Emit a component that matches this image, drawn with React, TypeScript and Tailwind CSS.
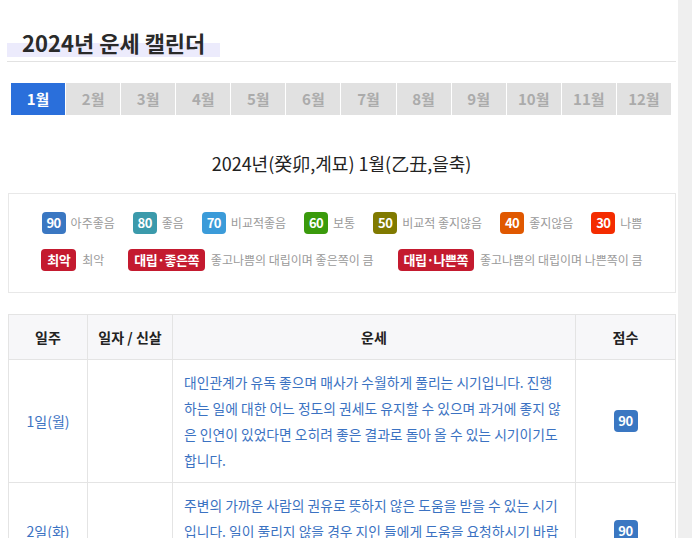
const months = ["1월", "2월", "3월", "4월", "5월", "6월", "7월", "8월", "9월", "10월", "11월", "12월"];

const scores = [
  { n: 90, label: "아주좋음", bg: "bg-[#3a77c2]" },
  { n: 80, label: "좋음", bg: "bg-[#3b9aab]" },
  { n: 70, label: "비교적좋음", bg: "bg-[#3b9bd9]" },
  { n: 60, label: "보통", bg: "bg-[#3a9a0c]" },
  { n: 50, label: "비교적 좋지않음", bg: "bg-[#807a00]" },
  { n: 40, label: "좋지않음", bg: "bg-[#e05800]" },
  { n: 30, label: "나쁨", bg: "bg-[#f42c00]" },
];

const specials = [
  { tag: "최악", label: "최악" },
  { tag: "대립·좋은쪽", label: "좋고나쁨의 대립이며 좋은쪽이 큼" },
  { tag: "대립·나쁜쪽", label: "좋고나쁨의 대립이며 나쁜쪽이 큼" },
];

const days = [
  {
    date: "1일(월)",
    score: 90,
    lines: [
      "대인관계가 유독 좋으며 매사가 수월하게 풀리는 시기입니다. 진행",
      "하는 일에 대한 어느 정도의 권세도 유지할 수 있으며 과거에 좋지 않",
      "은 인연이 있었다면 오히려 좋은 결과로 돌아 올 수 있는 시기이기도",
      "합니다.",
    ],
  },
  {
    date: "2일(화)",
    score: 90,
    lines: [
      "주변의 가까운 사람의 권유로 뜻하지 않은 도움을 받을 수 있는 시기",
      "입니다. 일이 풀리지 않을 경우 지인 들에게 도움을 요청하시기 바랍",
      "니다. 작은 부탁이 큰 결과로 돌아올 수 있습니다.",
    ],
  },
];

export default function App() {
  return (
    <div className="flex h-screen overflow-hidden bg-white font-['Noto_Sans_CJK_KR','Noto_Sans',sans-serif] text-[#222]">
      <main className="flex-1 pl-[7px] pr-[2px]">
        {/* Heading */}
        <div className="border-b border-[#e2e2e2] pt-[27px] pb-[4px]">
          <h1 className="inline-block h-[30px] bg-[linear-gradient(transparent_16px,#ecebfc_16px)] px-[15px] text-[22px] leading-[30px] font-bold text-[#2a2a2a]">
            2024년 운세 캘린더
          </h1>
        </div>

        {/* Month tabs */}
        <div className="mt-[21px] ml-[4px] mr-[5px] flex gap-px">
          {months.map((m, i) => (
            <div
              key={m}
              className={
                i === 0
                  ? "flex h-[32px] flex-1 items-center justify-center bg-[#2a6fdb] text-[15px] font-bold text-white"
                  : "flex h-[32px] flex-1 items-center justify-center bg-[#e1e1e1] text-[15px] font-semibold text-[#ababab]"
              }
            >
              {m}
            </div>
          ))}
        </div>

        <p className="mt-[36px] text-center text-[18px] leading-[24px] text-[#222]">
          2024년(癸卯,계묘) 1월(乙丑,을축)
        </p>

        {/* Legend */}
        <div className="mt-[18px] ml-px border border-[#e8e8e8] pt-[18px] pb-[21px]">
          <div className="flex justify-center gap-[18px]">
            {scores.map((s) => (
              <div key={s.n} className="flex items-center gap-[5px]">
                <span
                  className={`flex h-[22px] w-[24px] items-center justify-center rounded-[4px] text-[13px] font-bold tracking-[-0.5px] text-white ${s.bg}`}
                >
                  {s.n}
                </span>
                <span className="text-[12px] text-[#9a9a9a]">{s.label}</span>
              </div>
            ))}
          </div>
          <div className="mt-[15px] flex justify-center gap-[24px]">
            {specials.map((s) => (
              <div key={s.tag} className="flex items-center gap-[6px]">
                <span className="flex h-[22px] items-center rounded-[4px] bg-[#c41a2f] px-[6px] text-[13px] font-bold tracking-[-0.5px] text-white">
                  {s.tag}
                </span>
                <span className="text-[12px] text-[#9a9a9a]">{s.label}</span>
              </div>
            ))}
          </div>
        </div>

        {/* Table */}
        <table className="mt-[21px] ml-px w-[667px] table-fixed border-collapse text-[14px]">
          <colgroup>
            <col className="w-[79px]" />
            <col className="w-[85px]" />
            <col className="w-[403px]" />
            <col className="w-[100px]" />
          </colgroup>
          <thead>
            <tr className="h-[45px] bg-[#f7f7f9]">
              <th className="border border-[#e4e4e4] font-bold text-[#222]">일주</th>
              <th className="border border-[#e4e4e4] font-bold text-[#222]">일자 / 신살</th>
              <th className="border border-[#e4e4e4] font-bold text-[#222]">운세</th>
              <th className="border border-[#e4e4e4] font-bold text-[#222]">점수</th>
            </tr>
          </thead>
          <tbody>
            {days.map((d) => (
              <tr key={d.date}>
                <td className="border border-[#e4e4e4] text-center text-[14px] text-[#3b72c2]">{d.date}</td>
                <td className="border border-[#e4e4e4]"></td>
                <td className="border border-[#e4e4e4] px-[11px] py-[9px] text-[13.8px] leading-[26px] text-[#3b72c2]">
                  {d.lines.map((l) => (
                    <span key={l} className="block whitespace-nowrap">
                      {l}
                    </span>
                  ))}
                </td>
                <td className="border border-[#e4e4e4] text-center">
                  <span className="inline-flex h-[22px] w-[24px] items-center justify-center rounded-[4px] bg-[#3a77c2] text-[13px] font-bold tracking-[-0.5px] text-white">
                    {d.score}
                  </span>
                </td>
              </tr>
            ))}
          </tbody>
        </table>
      </main>
      <aside className="w-[15px] shrink-0 bg-[#efefef]" />
    </div>
  );
}
